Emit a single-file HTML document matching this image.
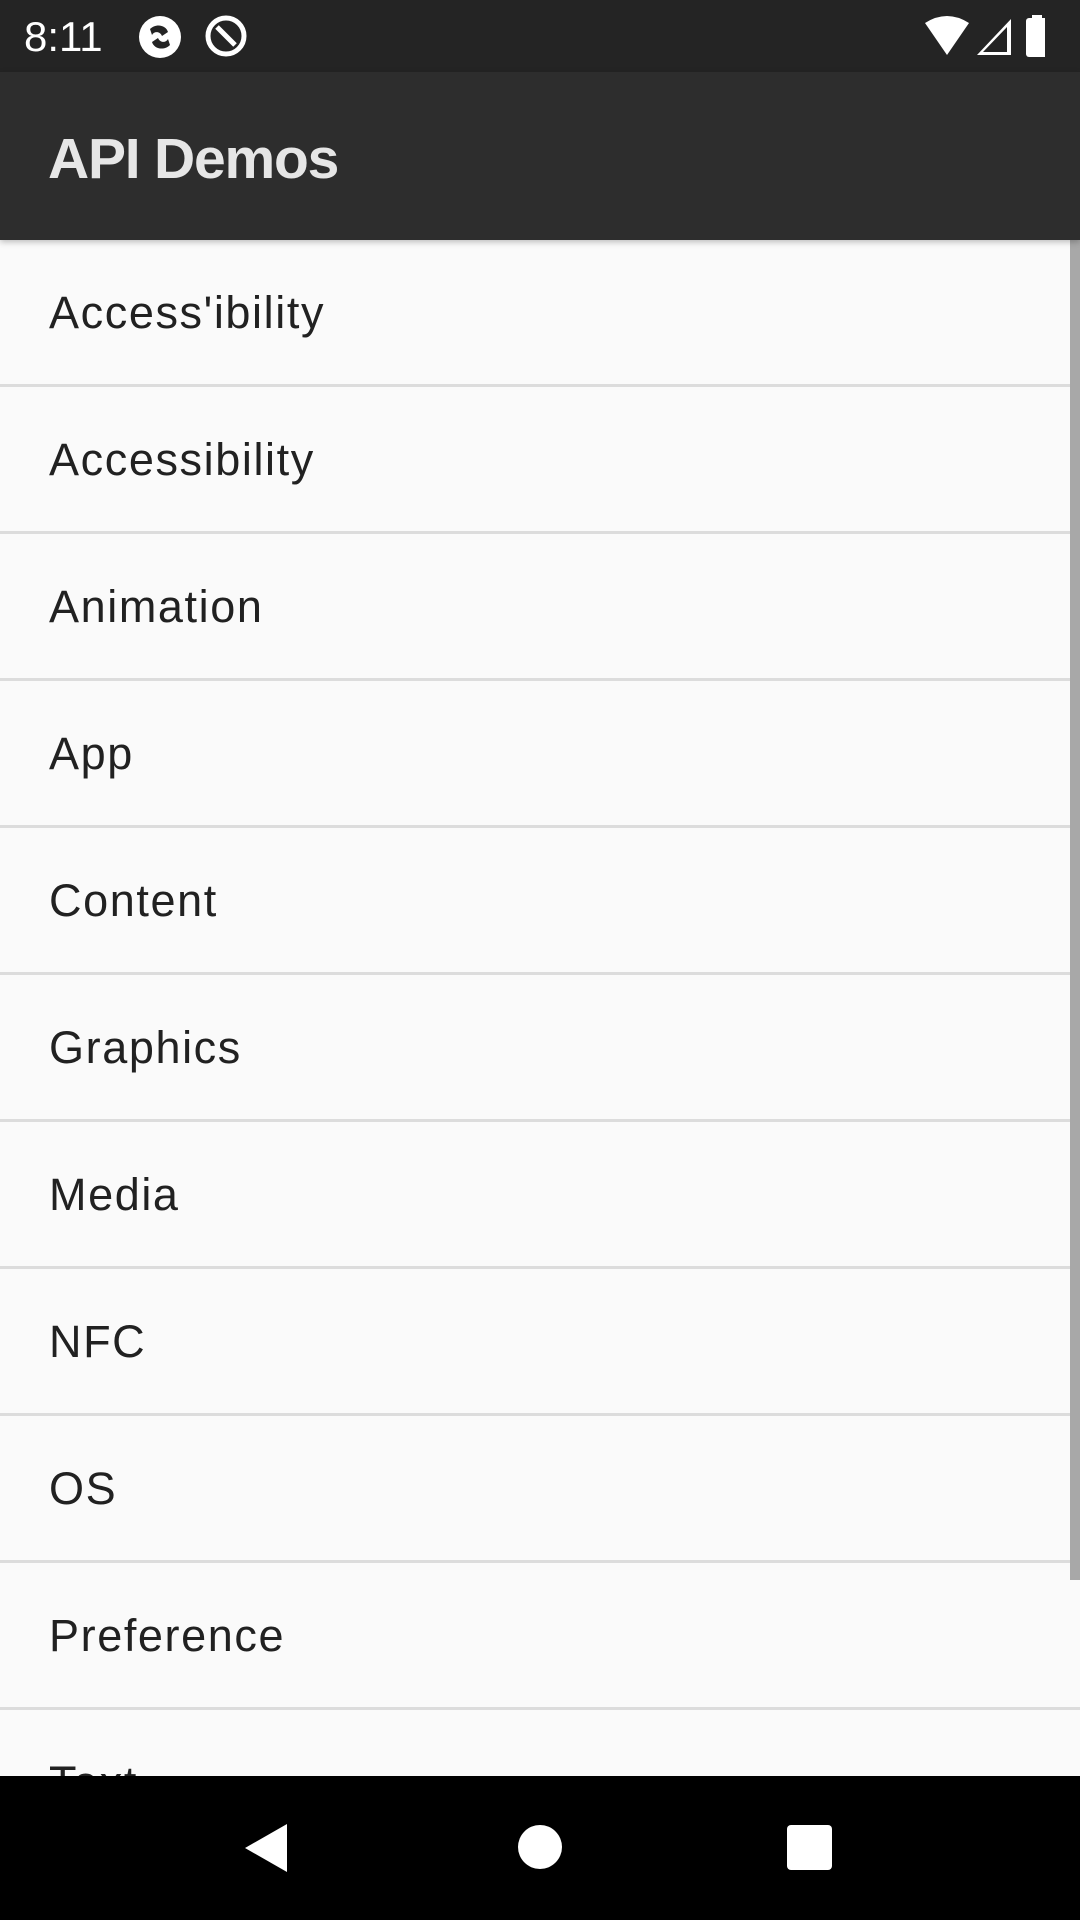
<!DOCTYPE html>
<html><head><meta charset="utf-8"><style>
*{margin:0;padding:0;box-sizing:border-box}
body{width:1080px;height:1920px;overflow:hidden;background:#fafafa;font-family:"Liberation Sans",sans-serif;position:relative}
#sb{position:absolute;top:0;left:0;width:1080px;height:72px;background:#242424;color:#fff}
#tb{position:absolute;top:72px;left:0;width:1080px;height:168px;background:#2d2d2d;box-shadow:0 2px 6px rgba(0,0,0,.25);z-index:2}
#tb span{position:absolute;left:48px;top:54px;font-size:57px;font-weight:bold;color:#e6e6e6;letter-spacing:-1.2px}
.row{position:absolute;left:0;width:1080px;height:147px;border-bottom:3px solid #dcdcdc}
.row span{position:absolute;left:49px;top:50px;font-size:45px;color:#212121;line-height:45px;letter-spacing:1.6px}
#scroll{position:absolute;right:0;top:240px;width:10px;height:1340px;background:#a8a8a8}
#nav{position:absolute;top:1776px;left:0;width:1080px;height:144px;background:#000}
</style></head><body>
<div id="sb">
<span style="position:absolute;left:24px;top:13px;font-size:42px;color:#fff">8:11</span>
<svg style="position:absolute;left:136px;top:13px" width="48" height="48" viewBox="0 0 48 48"><circle cx="24" cy="24" r="21" fill="#fff"/><path d="M14 16c6-6 16-4 18 3l-6 4c-2-5-8-5-10-1z M34 32c-6 6-16 4-18-3l6-4c2 5 8 5 10 1z" fill="#242424"/></svg>
<svg style="position:absolute;left:203px;top:13px" width="46" height="46" viewBox="0 0 46 46"><circle cx="23" cy="23" r="18" fill="none" stroke="#fff" stroke-width="5"/><path d="M14 14l18 18" stroke="#fff" stroke-width="5"/></svg>
<svg style="position:absolute;left:925px;top:15px" width="120" height="42" viewBox="0 0 120 42"><path d="M0 8Q22 -6 44 8L22 40Z" fill="#fff"/><path d="M52 40L86 4V40Z M58 37L82 37V12Z" fill="#fff" fill-rule="evenodd"/><rect x="101" y="3" width="22" height="39" rx="3" fill="#fff"/><rect x="107" y="0" width="10" height="5" fill="#fff"/></svg>
</div>
<div id="tb"><span>API Demos</span></div>
<div class="row" style="top:240px"><span>Access'ibility</span></div>
<div class="row" style="top:387px"><span>Accessibility</span></div>
<div class="row" style="top:534px"><span>Animation</span></div>
<div class="row" style="top:681px"><span>App</span></div>
<div class="row" style="top:828px"><span>Content</span></div>
<div class="row" style="top:975px"><span>Graphics</span></div>
<div class="row" style="top:1122px"><span>Media</span></div>
<div class="row" style="top:1269px"><span>NFC</span></div>
<div class="row" style="top:1416px"><span>OS</span></div>
<div class="row" style="top:1563px"><span>Preference</span></div>
<div class="row" style="top:1710px"><span>Text</span></div>
<div id="scroll"></div>
<div id="nav">
<svg style="position:absolute;left:243px;top:46px" width="48" height="52" viewBox="0 0 48 52"><path d="M2 26L44 2V50Z" fill="#fff"/></svg>
<div style="position:absolute;left:518px;top:49px;width:44px;height:44px;border-radius:50%;background:#fff"></div>
<div style="position:absolute;left:787px;top:49px;width:45px;height:45px;border-radius:4px;background:#fff"></div>
</div>
</body></html>
